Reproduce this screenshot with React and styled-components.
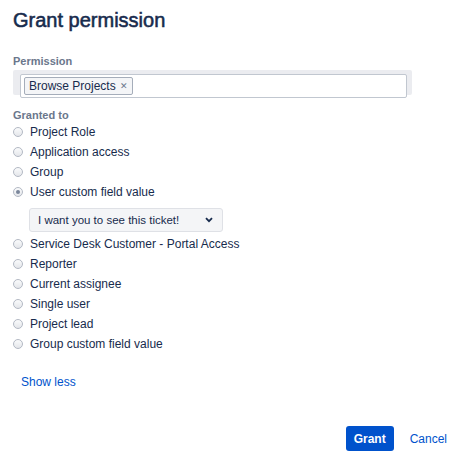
import React from "react";
import styled, { createGlobalStyle } from "styled-components";

const Global = createGlobalStyle`
  html, body { margin: 0; padding: 0; background: #fff; }
  body { font-family: "Liberation Sans", Arial, sans-serif; color: #172B4D; }
`;

const Dialog = styled.div`
  width: 471px;
  height: 467px;
  box-sizing: border-box;
  padding: 8px 13px 0 13px;
  display: flex;
  flex-direction: column;
`;

const Title = styled.h1`
  margin: 0;
  font-size: 20px;
  line-height: 24px;
  font-weight: 400;
  -webkit-text-stroke: 0.55px #172B4D;
  color: #172B4D;
`;

const Label = styled.div`
  font-size: 11px;
  font-weight: 700;
  color: #6B778C;
  line-height: 14px;
  margin-top: ${(p) => p.$mt || 0}px;
`;

const PickerWrap = styled.div`
  margin-top: 2px;
  width: 399px;
  height: 25px;
  background: #EBECF0;
  border-radius: 2px;
  padding: 4px 5px 0 7px;
  box-sizing: border-box;
`;

const PickerInput = styled.div`
  height: 24px;
  background: #fff;
  border: 1px solid #C1C7D0;
  border-radius: 2px;
  box-sizing: border-box;
  display: flex;
  align-items: center;
  padding-left: 3px;
`;

const Tag = styled.span`
  display: inline-flex;
  align-items: center;
  height: 16px;
  padding: 0 4px;
  border: 1px solid #A5ADBA;
  background: #F4F5F7;
  border-radius: 2px;
  font-size: 12px;
  color: #172B4D;
  gap: 4px;
`;

const TagX = styled.span`
  font-size: 9px;
  color: #6B778C;
`;

const RadioList = styled.div`
  display: flex;
  flex-direction: column;
`;

const Row = styled.label`
  display: flex;
  align-items: center;
  height: 20px;
  font-size: 12px;
  color: #172B4D;
  gap: 7px;
`;

const Circle = styled.span`
  width: 10px;
  height: 10px;
  box-sizing: border-box;
  border-radius: 50%;
  border: 1px solid #B3B9C4;
  background: linear-gradient(#FAFBFC, #E4E6EA);
  display: flex;
  align-items: center;
  justify-content: center;
  flex: none;
  &::after {
    content: "";
    width: 4px;
    height: 4px;
    border-radius: 50%;
    background: ${(p) => (p.$on ? "#7A869A" : "transparent")};
  }
`;

const SelectBox = styled.div`
  margin: 6px 0 2px 16px;
  width: 194px;
  height: 24px;
  box-sizing: border-box;
  border: 1px solid #DFE1E6;
  border-radius: 3px;
  background: #F4F5F7;
  display: flex;
  align-items: center;
  justify-content: space-between;
  padding: 0 9px 0 8px;
  font-size: 11.5px;
  color: #172B4D;
`;

const ShowLess = styled.a`
  margin: 21px 0 0 8px;
  font-size: 12px;
  color: #0052CC;
  text-decoration: none;
`;

const Footer = styled.div`
  margin-top: auto;
  margin-bottom: 16px;
  display: flex;
  justify-content: flex-end;
  align-items: center;
  gap: 16px;
  padding-right: 11px;
`;

const PrimaryBtn = styled.button`
  height: 25px;
  padding: 0 8px;
  border: none;
  border-radius: 3px;
  background: #0052CC;
  color: #fff;
  font-family: inherit;
  font-weight: 700;
  font-size: 12px;
`;

const LinkBtn = styled.span`
  font-size: 12px;
  color: #0052CC;
`;

const options = [
  "Project Role",
  "Application access",
  "Group",
  "User custom field value",
  "Service Desk Customer - Portal Access",
  "Reporter",
  "Current assignee",
  "Single user",
  "Project lead",
  "Group custom field value",
];

export default function App() {
  return (
    <>
      <Global />
      <Dialog>
        <Title>Grant permission</Title>
        <Label $mt={22}>Permission</Label>
        <PickerWrap>
          <PickerInput>
            <Tag>
              Browse Projects <TagX>✕</TagX>
            </Tag>
          </PickerInput>
        </PickerWrap>
        <Label $mt={13}>Granted to</Label>
        <RadioList>
          {options.map((o, i) => (
            <React.Fragment key={o}>
              <Row>
                <Circle $on={i === 3} />
                {o}
              </Row>
              {i === 3 && (
                <SelectBox>
                  I want you to see this ticket!
                  <svg width="8" height="6" viewBox="0 0 8 6">
                    <path d="M1 1.2 L4 4.2 L7 1.2" stroke="#172B4D" strokeWidth="1.8" fill="none" />
                  </svg>
                </SelectBox>
              )}
            </React.Fragment>
          ))}
        </RadioList>
        <ShowLess href="#">Show less</ShowLess>
        <Footer>
          <PrimaryBtn>Grant</PrimaryBtn>
          <LinkBtn>Cancel</LinkBtn>
        </Footer>
      </Dialog>
    </>
  );
}
